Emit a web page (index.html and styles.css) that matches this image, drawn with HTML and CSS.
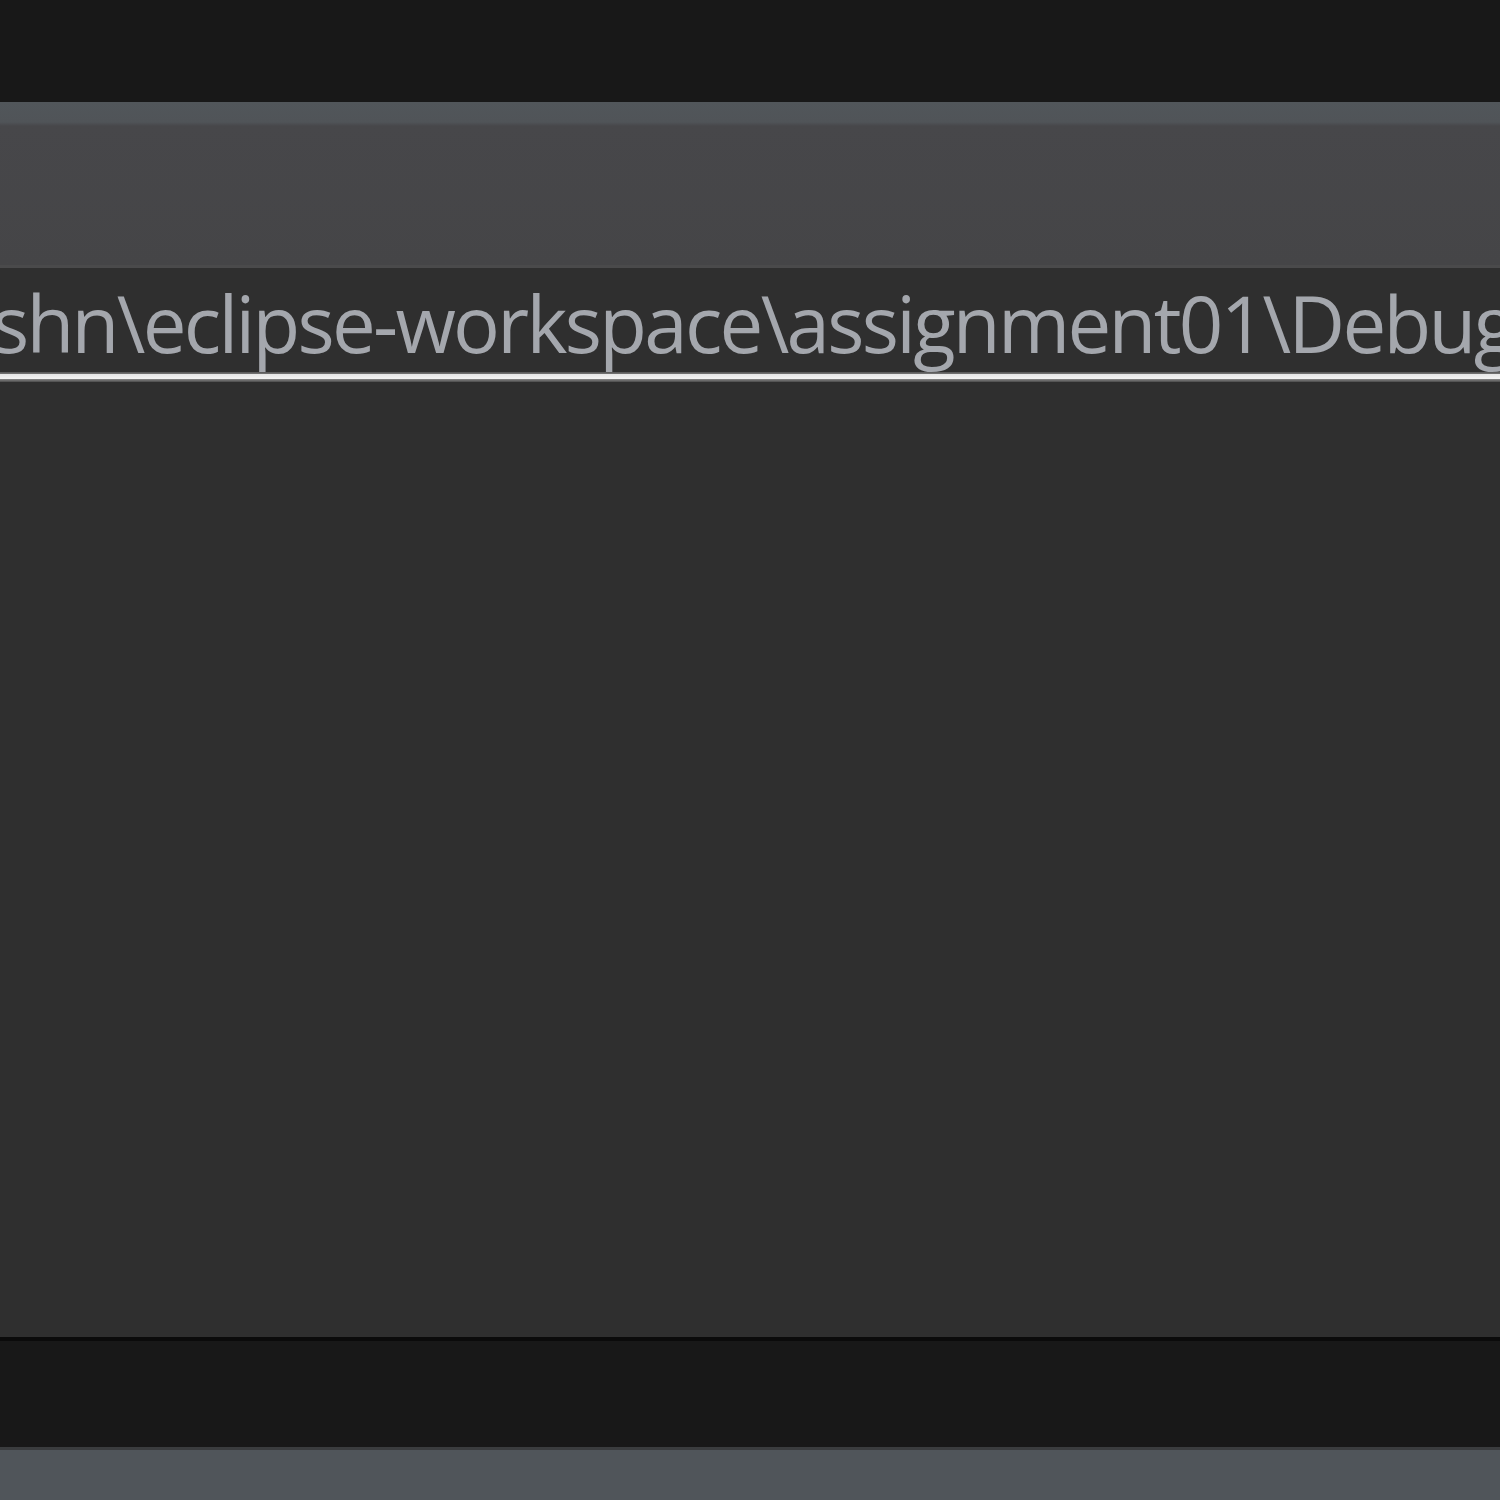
FILE: index.html
```html
<!DOCTYPE html>
<html>
<head>
<meta charset="utf-8">
<link rel="stylesheet" href="styles.css">
</head>
<body>
<div class="top-bar"></div>
<div class="toolbar"></div>
<div class="console">
  <div class="path-line"><span class="path-text">shn\eclipse-workspace\assignment01\Debug</span></div>
  <div class="rule"></div>
  <div class="console-body"></div>
</div>
<div class="status-bar"></div>
<div class="bottom-panel"></div>
</body>
</html>
```
FILE: styles.css
```css
html, body {
  margin: 0;
  padding: 0;
  width: 1500px;
  height: 1500px;
  overflow: hidden;
  background: #181818;
  font-family: "Open Sans", "Noto Sans", sans-serif;
}
.top-bar {
  height: 102px;
  background: #181818;
}
.toolbar {
  height: 163px;
  background: linear-gradient(to bottom, #51565a 0px, #505458 20px, #47474a 24px, #454547 100%);
  border-bottom: 3px solid #4a4a4b;
}
.console {
  height: 1069px;
  background: #2f2f2f;
  display: flex;
  flex-direction: column;
}
.path-line {
  height: 104px;
  flex: none;
  overflow: hidden;
  white-space: nowrap;
  display: flex;
  align-items: flex-start;
}
.path-text {
  color: #a4a7ad;
  font-size: 78px;
  line-height: 104px;
  letter-spacing: -2.7px;
  margin-left: -8px;
  margin-top: 3px;
}
.rule {
  height: 10px;
  flex: none;
  background: linear-gradient(to bottom, #555 0px, #777 2px, #e6e6e6 2px, #f4f4f4 7px, #8a8a8a 7px, #4a4a4a 10px);
}
.console-body {
  flex: 1;
}
.status-bar {
  height: 106px;
  background: #181818;
  border-top: 4px solid #0b0b0b;
}
.bottom-panel {
  height: 56px;
  border-top: 3px solid #3a3c3e;
  background: #50555a;
}
```
